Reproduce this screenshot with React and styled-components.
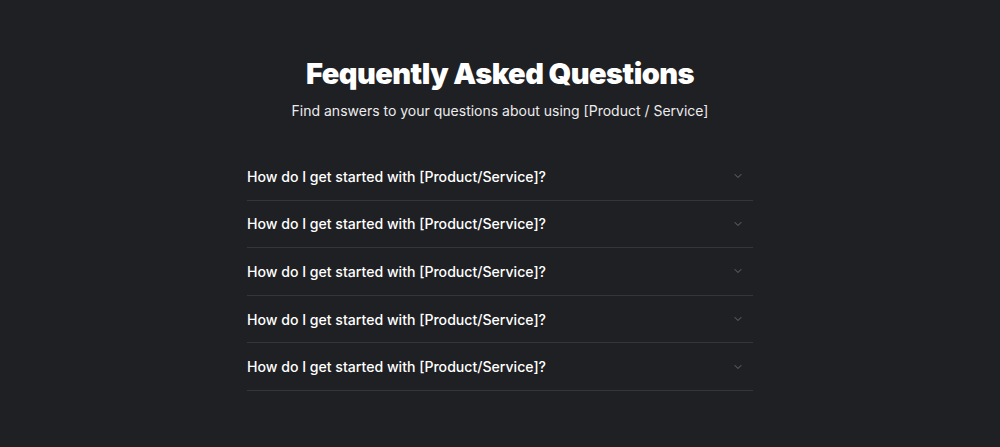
import React, { useState } from "react";
import styled, { createGlobalStyle } from "styled-components";

const GlobalStyle = createGlobalStyle`
  html, body {
    margin: 0;
    padding: 0;
    background: #1f2023;
  }
  body {
    font-family: Inter, "Noto Sans", sans-serif;
    -webkit-font-smoothing: antialiased;
  }
`;

const questions = [
  "How do I get started with [Product/Service]?",
  "How do I get started with [Product/Service]?",
  "How do I get started with [Product/Service]?",
  "How do I get started with [Product/Service]?",
  "How do I get started with [Product/Service]?",
];

const Chevron = () => (
  <svg width="12" height="12" viewBox="0 0 24 24" fill="none" stroke="currentColor" strokeWidth="2" strokeLinecap="round" strokeLinejoin="round">
    <path d="m6 9 6 6 6-6" />
  </svg>
);

const App = () => {
  const [open, setOpen] = useState(null);
  return (
    <>
      <GlobalStyle />
      <Page>
        <Header>
          <Title>Fequently Asked Questions</Title>
          <Subtitle>Find answers to your questions about using [Product / Service]</Subtitle>
        </Header>
        <List>
          {questions.map((q, i) => (
            <Item key={i}>
              <Trigger onClick={() => setOpen(open === i ? null : i)}>
                <span>{q}</span>
                <Icon $open={open === i}>
                  <Chevron />
                </Icon>
              </Trigger>
            </Item>
          ))}
        </List>
      </Page>
    </>
  );
};

export default App;

const Page = styled.div`
  min-height: 447px;
  box-sizing: border-box;
  padding-top: 57px;
  display: flex;
  flex-direction: column;
  align-items: center;
  color: #fff;
`;

const Header = styled.div`
  display: flex;
  flex-direction: column;
  align-items: center;
  gap: 9px;
  margin-bottom: 31px;
`;

const Title = styled.h2`
  margin: 0;
  font-size: 29px;
  line-height: 34px;
  font-weight: 900;
  letter-spacing: -0.55px;
`;

const Subtitle = styled.p`
  margin: 0;
  font-size: 14px;
  line-height: 22px;
  color: #ececee;
`;

const List = styled.div`
  width: 506px;
`;

const Item = styled.div`
  border-bottom: 1px solid #34363b;
`;

const Trigger = styled.button`
  width: 100%;
  height: 46.6px;
  padding: 0 9px 0 0;
  display: flex;
  align-items: center;
  justify-content: space-between;
  background: none;
  border: none;
  color: #fff;
  font-family: inherit;
  font-size: 14.1px;
  font-weight: 500;
  cursor: pointer;
  text-align: left;
`;

const Icon = styled.span`
  display: flex;
  color: #6b6d73;
  transform: rotate(${(p) => (p.$open ? "180deg" : "0deg")});
`;
